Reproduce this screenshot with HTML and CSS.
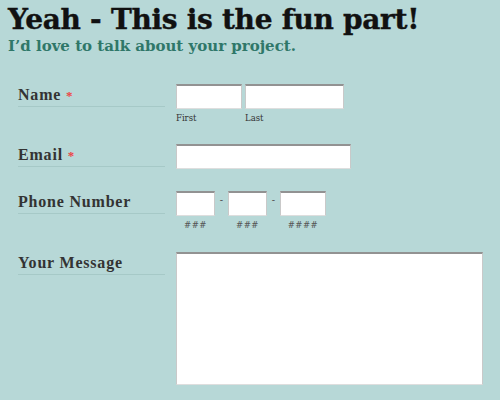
FILE: index.html
```html
<!DOCTYPE html>
<html>
<head>
<meta charset="utf-8">
<link rel="stylesheet" href="styles.css">
</head>
<body>
<div class="page">
  <h1 class="title">Yeah - This is the fun part!</h1>
  <p class="subtitle">I’d love to talk about your project.</p>
  <form class="form">
    <div class="row row-name">
      <div class="label">Name <span class="req">*</span></div>
      <div class="fields">
        <div class="sub">
          <span class="box box-first"></span>
          <span class="hint">First</span>
        </div>
        <div class="sub">
          <span class="box box-last"></span>
          <span class="hint">Last</span>
        </div>
      </div>
    </div>
    <div class="row row-email">
      <div class="label">Email <span class="req">*</span></div>
      <div class="fields">
        <span class="box box-email"></span>
      </div>
    </div>
    <div class="row row-phone">
      <div class="label">Phone Number</div>
      <div class="fields phone">
        <div class="sub center">
          <span class="box box-p3"></span>
          <span class="hint hash">###</span>
        </div>
        <span class="dash">-</span>
        <div class="sub center">
          <span class="box box-p3b"></span>
          <span class="hint hash">###</span>
        </div>
        <span class="dash">-</span>
        <div class="sub center">
          <span class="box box-p4"></span>
          <span class="hint hash">####</span>
        </div>
      </div>
    </div>
    <div class="row row-msg">
      <div class="label">Your Message</div>
      <div class="fields">
        <span class="box box-msg"></span>
      </div>
    </div>
  </form>
</div>
</body>
</html>
```
FILE: styles.css
```css
html, body {
  margin: 0;
  padding: 0;
  background: #b7d8d7;
}
.page {
  padding: 4px 8px 0 8px;
  width: 484px;
  height: 396px;
  overflow: hidden;
}
.title {
  margin: 0;
  font-family: "DejaVu Serif", serif;
  font-weight: bold;
  font-size: 28px;
  line-height: 32px;
  color: #111;
  letter-spacing: -0.3px;
  -webkit-text-stroke: 0.4px #111;
}
.subtitle {
  margin: 0;
  margin-top: 1px;
  font-family: "DejaVu Serif", serif;
  font-weight: bold;
  font-size: 15px;
  line-height: 18px;
  color: #2f7769;
  letter-spacing: 0;
}
.form {
  display: flex;
  flex-direction: column;
  margin-top: 29px;
  padding-left: 10px;
}
.row {
  display: flex;
  align-items: flex-start;
}
.row-email { margin-top: 20px; }
.row-phone { margin-top: 22px; }
.row-msg { margin-top: 21px; }
.label {
  width: 147px;
  height: 22px;
  margin-right: 11px;
  border-bottom: 1px solid #a6c9c7;
  font-family: "Liberation Serif", serif;
  font-weight: bold;
  font-size: 16px;
  line-height: 22px;
  letter-spacing: 0.8px;
  color: #333;
}
.req {
  color: #ee4444;
  font-size: 13px;
}
.fields {
  display: flex;
  align-items: flex-start;
}
.sub {
  display: flex;
  flex-direction: column;
  margin-right: 3px;
}
.sub.center {
  align-items: center;
  margin-right: 0;
}
.box {
  display: block;
  background: #fff;
  border-top: 2px solid #929292;
  border-left: 1px solid #c9c9c9;
  border-right: 1px solid #c9c9c9;
  border-bottom: 1px solid #dedede;
  box-sizing: border-box;
  height: 25px;
}
.box-first { width: 66px; }
.box-last { width: 99px; }
.box-email { width: 175px; }
.box-p3 { width: 39px; }
.box-p3b { width: 39px; }
.box-p4 { width: 46px; }
.box-msg { width: 307px; height: 133px; }
.hint {
  margin-top: 3px;
  font-family: "DejaVu Serif", serif;
  font-size: 8.5px;
  line-height: 12px;
  color: #333;
}
.hash {
  font-style: italic;
  color: #555;
  letter-spacing: 0.5px;
}
.dash {
  width: 13px;
  text-align: center;
  font-family: "Liberation Sans", sans-serif;
  font-size: 10px;
  line-height: 18px;
  color: #555;
}
```
